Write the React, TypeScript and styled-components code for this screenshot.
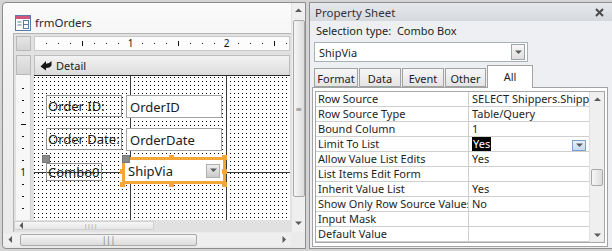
import styled, { createGlobalStyle } from 'styled-components'

const FONT = `"Noto Sans", "Open Sans", "DejaVu Sans", sans-serif`

const GlobalStyle = createGlobalStyle`
  html, body { margin: 0; padding: 0; background: #d4d4d4; }
  body { font-family: ${FONT}; }
  * { box-sizing: border-box; }
`

const Screen = styled.div`
  width: 612px;
  height: 251px;
  overflow: hidden;
  display: flex;
  align-items: flex-start;
  gap: 3px;
  padding: 2px 0 0 2px;
  background: #d4d4d4;
`

/* ---------- scrollbars ---------- */

const Track = styled.div<{ $vertical?: boolean }>`
  display: flex;
  flex-direction: ${p => (p.$vertical ? 'column' : 'row')};
  align-items: center;
  background: #efefef;
  ${p => (p.$vertical ? 'width: 14px; border-left: 1px solid #e2e2e2;' : 'height: 13px; width: 288px;')}
`

const Arrow = styled.div<{ $size: number }>`
  flex: 0 0 ${p => p.$size}px;
  width: ${p => p.$size}px;
  height: ${p => p.$size}px;
  display: flex;
  align-items: center;
  justify-content: center;
`

const Thumb = styled.div<{ $vertical?: boolean; $len: number }>`
  ${p =>
    p.$vertical
      ? `width: 12px; height: ${p.$len}px; background: linear-gradient(90deg, #f6f6f6, #dcdcdc);`
      : `height: 12px; width: ${p.$len}px; background: linear-gradient(#f6f6f6, #dcdcdc);`}
  border: 1px solid #a9a9a9;
  border-radius: 2px;
  display: flex;
  align-items: center;
  justify-content: center;
  color: #777;
  font-size: 8px;
  line-height: 1;
`

const Spacer = styled.div<{ $len: number }>`
  flex: 0 0 ${p => p.$len}px;
`

const Grow = styled.div`
  flex: 1;
`

type Dir = 'up' | 'down' | 'left' | 'right'

const Tri = ({ dir }: { dir: Dir }) => {
  const pts: Record<Dir, string> = {
    up: '0,4 3.5,0.5 7,4',
    down: '0,0.5 3.5,4 7,0.5',
    left: '4,0 0.5,3.5 4,7',
    right: '0.5,0 4,3.5 0.5,7'
  }
  const v = dir === 'up' || dir === 'down'
  return (
    <svg width={v ? 7 : 5} height={v ? 5 : 7} viewBox={v ? '0 0 7 5' : '0 0 5 7'}>
      <polygon points={pts[dir]} fill="#5a5a5a" />
    </svg>
  )
}

/* ---------- form design window ---------- */

const FormWindow = styled.div`
  width: 304px;
  height: 247px;
  border: 1px solid #8d8d8d;
  border-radius: 4px 0 0 4px;
  background: linear-gradient(#fbfbfb, #efefef 30%, #eaeaea);
  display: flex;
  flex-direction: column;
`

const MainRow = styled.div`
  height: 229px;
  display: flex;
`

const MainCol = styled.div`
  flex: 1;
  display: flex;
  flex-direction: column;
`

const Title = styled.div`
  height: 30px;
  padding: 9px 0 0 12px;
  display: flex;
  align-items: center;
  gap: 4px;
  font-size: 11.5px;
  color: #1f2a36;
`

const DesignFrame = styled.div`
  flex: 1;
  margin-left: 10px;
  background: #e1e1e1;
  border-top: 1px solid #b4b4b4;
  border-left: 1px solid #b4b4b4;
  display: flex;
  flex-direction: column;
  padding: 2px 0 0 2px;
`

const FrameRow = styled.div<{ $h: number; $top?: number }>`
  display: flex;
  gap: 3px;
  height: ${p => p.$h}px;
  margin-top: ${p => p.$top ?? 0}px;
`

const GrayBox = styled.div`
  width: 15px;
  background: linear-gradient(#e6e6e6, #d3d3d3);
  border: 1px solid #b9b9b9;
`

const RulerH = styled.div`
  width: 256px;
  background: #fcfcfc;
  border: 1px solid #c9c9c9;
  display: flex;
  align-items: center;
`

const RulerV = styled.div`
  width: 15px;
  background: #f7f7f7;
  border-right: 1px solid #d0d0d0;
`

const SectionBar = styled.div`
  width: 256px;
  background: linear-gradient(#f3f3f3, #dcdcdc);
  border: 1px solid #bdbdbd;
  border-bottom: none;
  display: flex;
  align-items: center;
  gap: 4px;
  padding-left: 5px;
  font-size: 11px;
  color: #222;
`

const Canvas = styled.div`
  position: relative;
  width: 256px;
  border-top: 1px solid #2a2a2a;
  background-color: #000;
  background-image: linear-gradient(90deg, #fff 3px, transparent 3px),
    linear-gradient(#fff 3px, transparent 3px);
  background-size: 4px 4px;
  background-position: 1px 2px;
  overflow: hidden;
`

const GridLine = styled.div<{ $vertical?: boolean; $at: number }>`
  position: absolute;
  background: #3a3a3a;
  ${p =>
    p.$vertical
      ? `left: ${p.$at}px; top: 0; bottom: 0; width: 1px;`
      : `top: ${p.$at}px; left: 0; right: 0; height: 1px;`}
`

const Placed = styled.div<{ $x: number; $y: number; $w: number; $h: number }>`
  position: absolute;
  left: ${p => p.$x}px;
  top: ${p => p.$y}px;
  width: ${p => p.$w}px;
  height: ${p => p.$h}px;
`

const FormLabel = styled(Placed)`
  border: 1px solid #8f8f8f;
  display: flex;
  align-items: center;
  padding-left: 1px;
  font-size: 13px;
  color: #202020;
  white-space: nowrap;
  overflow: hidden;
`

const TextBox = styled(Placed)`
  border: 1px solid #a3a3a3;
  background: #fff;
  display: flex;
  align-items: center;
  padding-left: 3px;
  font-size: 13px;
  color: #202020;
  white-space: nowrap;
`

const Selected = styled(Placed)`
  border: 3px solid #f6a537;
  background: #fff;
  display: flex;
  align-items: center;
  padding-left: 3px;
  font-size: 13px;
  color: #202020;
`

const ComboBtn = styled.div`
  margin-left: auto;
  margin-right: 3px;
  width: 14px;
  height: 14px;
  background: linear-gradient(#f0f0f0, #c9c9c9);
  border: 1px solid #b0b0b0;
  display: flex;
  align-items: center;
  justify-content: center;
`

const MoveHandle = styled(Placed)`
  background: #8a8a8a;
  border: 1px solid #777;
`

const SizeHandle = styled(Placed)`
  background: #f6a537;
`

const MiniScroll = styled.div`
  width: 140px;
  height: 9px;
  margin-top: 1px;
  margin-left: -2px;
  background: linear-gradient(#f7f7f7, #e6e6e6);
  border: 1px solid #cfcfcf;
  display: flex;
  align-items: center;
  padding-left: 4px;
  font-size: 6px;
  color: #888;
`

const BottomRow = styled.div`
  display: flex;
  margin-top: 1px;
`

/* ---------- property sheet ---------- */

const PropPanel = styled.div`
  width: 303px;
  height: 247px;
  border: 1px solid #8f8f8f;
  border-right: none;
  background: #edeff2;
  display: flex;
  flex-direction: column;
  font-size: 11px;
  color: #1e1e1e;
`

const PanelHeader = styled.div`
  height: 20px;
  background: linear-gradient(#e5e8ec, #d5d9de);
  display: flex;
  align-items: center;
  justify-content: space-between;
  padding: 0 8px 0 5px;
  font-size: 11.5px;
  color: #333;
`

const SelectionType = styled.div`
  height: 15px;
  margin-top: 2px;
  padding-left: 6px;
  display: flex;
  align-items: center;
  white-space: pre;
`

const ObjectCombo = styled.div`
  width: 214px;
  height: 22px;
  margin: 4px 0 0 4px;
  background: #fff;
  border: 1px solid #a9b0b8;
  display: flex;
  align-items: center;
  padding-left: 4px;
`

const ObjectComboBtn = styled.div`
  margin-left: auto;
  margin-right: 2px;
  width: 14px;
  height: 16px;
  border: 1px solid #9ea4ab;
  background: linear-gradient(#f8f8f8, #dedede);
  display: flex;
  align-items: center;
  justify-content: center;
`

const TabStrip = styled.div`
  display: flex;
  align-items: flex-end;
  height: 22px;
  margin: 3px 0 0 4px;
  gap: 1px;
`

const Tab = styled.div<{ $active?: boolean; $w: number }>`
  width: ${p => p.$w}px;
  height: ${p => (p.$active ? 23 : 19)}px;
  border: 1px solid #a2a2a2;
  border-bottom: ${p => (p.$active ? 'none' : '1px solid #a2a2a2')};
  background: ${p => (p.$active ? '#fff' : 'linear-gradient(#f7f7f7, #e4e4e4)')};
  display: flex;
  align-items: ${p => (p.$active ? 'flex-start' : 'center')};
  justify-content: center;
  padding-top: ${p => (p.$active ? 3 : 1)}px;
  margin-bottom: ${p => (p.$active ? -1 : 0)}px;
  position: relative;
`

const TabPage = styled.div`
  flex: 1;
  margin: 0 4px 1px 2px;
  border: 1px solid #a2a2a2;
  background: #fff;
  padding: 3px 2px 3px 2px;
  display: flex;
`

const PropGrid = styled.div`
  flex: 1;
  border: 1px solid #a7a7a7;
  display: flex;
`

const Rows = styled.div`
  width: 273px;
  display: flex;
  flex-direction: column;
  overflow: hidden;
`

const PropRow = styled.div`
  height: 15px;
  display: grid;
  grid-template-columns: 153px 120px;
  border-bottom: 1px solid #cfcfcf;
  line-height: 14px;
`

const NameCell = styled.div`
  padding-left: 2px;
  border-right: 1px solid #cfcfcf;
  white-space: nowrap;
  overflow: hidden;
`

const ValueCell = styled.div`
  padding-left: 3px;
  white-space: nowrap;
  overflow: hidden;
  display: flex;
  align-items: center;
`

const Highlight = styled.span`
  background: #000;
  color: #fff;
  padding: 0 1px;
`

const CellBtn = styled.div`
  margin-left: auto;
  margin-right: 3px;
  margin-top: 3px;
  width: 14px;
  height: 11px;
  border: 1px solid #7e9fc8;
  background: linear-gradient(#e9f2fb, #c3d9f0);
  display: flex;
  align-items: center;
  justify-content: center;
`

const PropScroll = styled(Track)`
  width: 15px;
  border-left: 1px solid #e0e0e0;
`

const FormIcon = () => (
  <svg width="16" height="16" viewBox="0 0 16 16">
    <rect x="0.5" y="0.5" width="15" height="15" fill="#fff" stroke="#5d7aa6" />
    <rect x="1" y="1" width="14" height="3" fill="#d2557a" />
    <rect x="2.5" y="6.5" width="4" height="1" fill="#5d7aa6" />
    <rect x="2.5" y="9.5" width="4" height="1" fill="#5d7aa6" />
    <rect x="8.5" y="5.5" width="5" height="8" fill="none" stroke="#5d7aa6" />
    <rect x="9" y="9" width="4" height="1" fill="#5d7aa6" />
  </svg>
)

const SectionIcon = () => (
  <svg width="12" height="11" viewBox="0 0 12 11">
    <path d="M0.5 6.5 L6 1 L6 3.8 Q9.5 3.5 11.5 1 L11.5 5.5 Q10 8 6 8 L6 10.5 Z" fill="#151515" />
  </svg>
)

const CloseIcon = () => (
  <svg width="9" height="9" viewBox="0 0 9 9">
    <path d="M1 1 L8 8 M8 1 L1 8" stroke="#4a4a4a" strokeWidth="2" />
  </svg>
)

const HRulerMarks = () => {
  const ticks = Array.from({ length: 21 }, (_, i) => 11 + i * 12)
  return (
    <svg width="256" height="13" overflow="visible">
      {ticks.map((x, i) => {
        const n = i + 1
        if (n % 8 === 0) return null
        const long = n % 4 === 0
        return <rect key={x} x={x} y={long ? 4 : 6} width="1" height={long ? 5 : 1} fill="#111" />
      })}
      <text x="95.5" y="10" fontSize="10" textAnchor="middle" fill="#111" fontFamily={FONT}>1</text>
      <text x="191.5" y="10" fontSize="10" textAnchor="middle" fill="#111" fontFamily={FONT}>2</text>
    </svg>
  )
}

const VRulerMarks = () => {
  const ticks = Array.from({ length: 11 }, (_, i) => 13 + i * 12)
  return (
    <svg width="15" height="145">
      {ticks.map((y, i) => {
        const n = i + 1
        if (n % 8 === 0) return null
        const long = n % 4 === 0
        return <rect key={y} x={long ? 5 : 6} y={y} width={long ? 5 : 2} height="1" fill="#111" />
      })}
      <text x="7" y="101" fontSize="10" textAnchor="middle" fill="#111" fontFamily={FONT}>1</text>
    </svg>
  )
}

const props: { name: string; value: string; picked?: boolean }[] = [
  { name: 'Row Source', value: 'SELECT Shippers.ShipperID' },
  { name: 'Row Source Type', value: 'Table/Query' },
  { name: 'Bound Column', value: '1' },
  { name: 'Limit To List', value: 'Yes', picked: true },
  { name: 'Allow Value List Edits', value: 'Yes' },
  { name: 'List Items Edit Form', value: '' },
  { name: 'Inherit Value List', value: 'Yes' },
  { name: 'Show Only Row Source Values', value: 'No' },
  { name: 'Input Mask', value: '' },
  { name: 'Default Value', value: '' }
]

const tabs = [
  { label: 'Format', w: 44 },
  { label: 'Data', w: 42 },
  { label: 'Event', w: 42 },
  { label: 'Other', w: 41 },
  { label: 'All', w: 46, active: true }
]

const handles: [number, number][] = [
  [136, 80], [189, 80], [189, 94], [189, 107], [136, 107], [87, 107], [87, 94]
]

const App = () => {
  return (
    <Screen>
      <GlobalStyle />
      <FormWindow>
        <MainRow>
          <MainCol>
            <Title>
              <FormIcon />
              frmOrders
            </Title>
            <DesignFrame>
              <FrameRow $h={15}>
                <GrayBox />
                <RulerH>
                  <HRulerMarks />
                </RulerH>
              </FrameRow>
              <FrameRow $h={20} $top={4}>
                <GrayBox />
                <SectionBar>
                  <SectionIcon />
                  Detail
                </SectionBar>
              </FrameRow>
              <FrameRow $h={145}>
                <RulerV>
                  <VRulerMarks />
                </RulerV>
                <Canvas>
                  <GridLine $vertical $at={96} />
                  <GridLine $vertical $at={192} />
                  <GridLine $at={96} />
                  <FormLabel $x={12} $y={19} $w={76} $h={22}>Order ID:</FormLabel>
                  <TextBox $x={92} $y={19} $w={96} $h={23}>OrderID</TextBox>
                  <FormLabel $x={12} $y={52} $w={76} $h={22}>Order Date:</FormLabel>
                  <TextBox $x={92} $y={52} $w={96} $h={23}>OrderDate</TextBox>
                  <FormLabel $x={12} $y={87} $w={56} $h={18}>Combo0</FormLabel>
                  <Selected $x={88} $y={81} $w={104} $h={27}>
                    ShipVia
                    <ComboBtn>
                      <Tri dir="down" />
                    </ComboBtn>
                  </Selected>
                  {handles.map(([x, y]) => (
                    <SizeHandle key={`${x}-${y}`} $x={x - 1} $y={y - 1} $w={5} $h={5} />
                  ))}
                  <MoveHandle $x={8} $y={79} $w={8} $h={8} />
                  <MoveHandle $x={88} $y={79} $w={8} $h={8} />
                </Canvas>
              </FrameRow>
              <MiniScroll>
                <Tri dir="left" />
                <Spacer $len={60} />
                ||||
              </MiniScroll>
            </DesignFrame>
          </MainCol>
          <Track $vertical>
            <Arrow $size={14}><Tri dir="up" /></Arrow>
            <Spacer $len={3} />
            <Thumb $vertical $len={177}>≡</Thumb>
            <Grow />
            <Arrow $size={14}><Tri dir="down" /></Arrow>
            <Spacer $len={2} />
          </Track>
        </MainRow>
        <BottomRow>
          <Track>
            <Arrow $size={14}><Tri dir="left" /></Arrow>
            <Spacer $len={3} />
            <Thumb $len={177}>|||</Thumb>
            <Grow />
            <Arrow $size={14}><Tri dir="right" /></Arrow>
          </Track>
        </BottomRow>
      </FormWindow>

      <PropPanel>
        <PanelHeader>
          Property Sheet
          <CloseIcon />
        </PanelHeader>
        <SelectionType>Selection type:  Combo Box</SelectionType>
        <ObjectCombo>
          ShipVia
          <ObjectComboBtn>
            <Tri dir="down" />
          </ObjectComboBtn>
        </ObjectCombo>
        <TabStrip>
          {tabs.map(t => (
            <Tab key={t.label} $w={t.w} $active={t.active}>{t.label}</Tab>
          ))}
        </TabStrip>
        <TabPage>
          <PropGrid>
            <Rows>
              {props.map(p => (
                <PropRow key={p.name}>
                  <NameCell>{p.name}</NameCell>
                  <ValueCell>
                    {p.picked ? <Highlight>{p.value}</Highlight> : p.value}
                    {p.picked && (
                      <CellBtn>
                        <Tri dir="down" />
                      </CellBtn>
                    )}
                  </ValueCell>
                </PropRow>
              ))}
            </Rows>
            <PropScroll $vertical>
              <Arrow $size={14}><Tri dir="up" /></Arrow>
              <Spacer $len={63} />
              <Thumb $vertical $len={17} />
              <Grow />
              <Arrow $size={14}><Tri dir="down" /></Arrow>
            </PropScroll>
          </PropGrid>
        </TabPage>
      </PropPanel>
    </Screen>
  )
}

export default App
